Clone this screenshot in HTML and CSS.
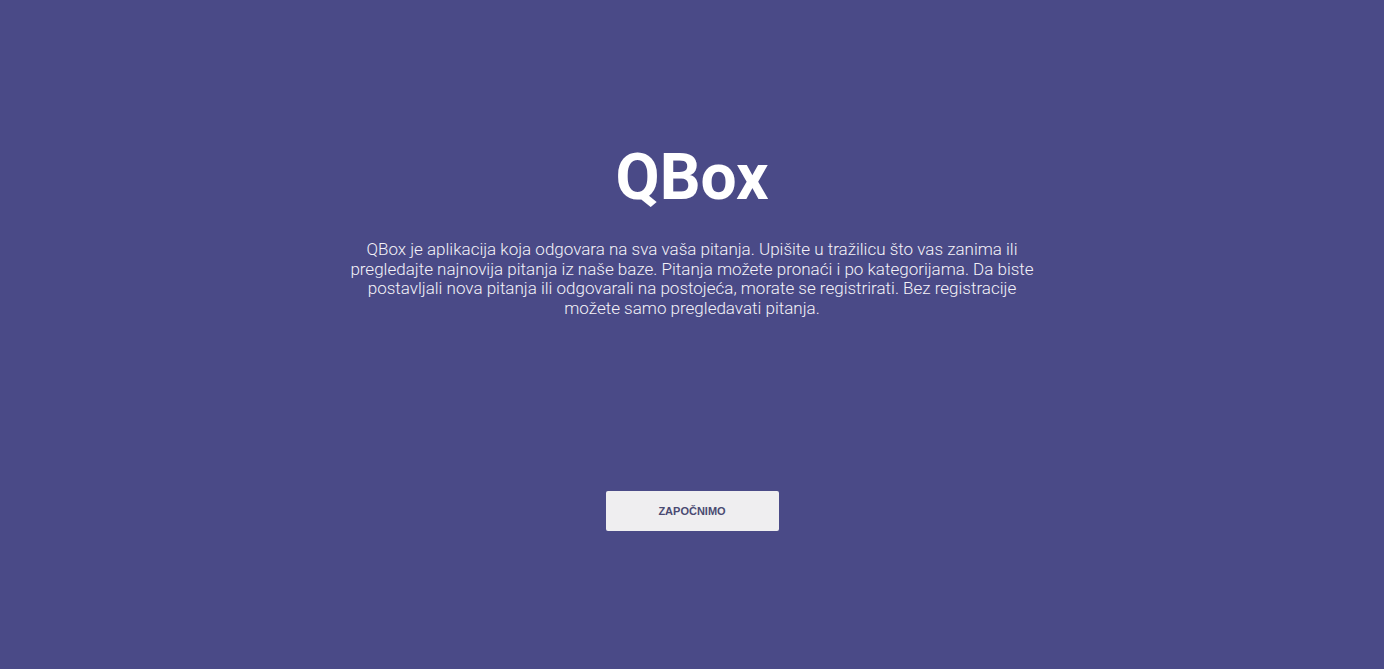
FILE: index.html
```html
<!DOCTYPE html>
<html lang="hr">
<head>
<meta charset="utf-8">
<title>QBox</title>
<link rel="stylesheet" href="styles.css">
</head>
<body>
<main class="hero">
  <h1 class="title">QBox</h1>
  <p class="intro">QBox je aplikacija koja odgovara na sva vaša pitanja. Upišite u tražilicu što vas zanima ili pregledajte najnovija pitanja iz naše baze. Pitanja možete pronaći i po kategorijama. Da biste postavljali nova pitanja ili odgovarali na postojeća, morate se registrirati. Bez registracije možete samo pregledavati pitanja.</p>
  <button class="start">ZAPOČNIMO</button>
</main>
</body>
</html>
```

FILE: styles.css
```css
html, body {
  margin: 0;
  padding: 0;
  height: 100%;
}
body {
  background: #4a4a87;
  font-family: Roboto, "Liberation Sans", sans-serif;
  color: #fff;
}
.hero {
  display: flex;
  flex-direction: column;
  align-items: center;
  padding-top: 138px;
}
.title {
  margin: 0;
  font-size: 64px;
  font-weight: 700;
  line-height: 80px;
}
.intro {
  margin: 22px 0 0;
  width: 690px;
  text-align: center;
  font-weight: 300;
  font-size: 17px;
  line-height: 19.5px;
  color: #f4f2f8;
}
.start {
  margin-top: 173px;
  width: 173px;
  height: 40px;
  border: none;
  border-radius: 2px;
  background: #efeef0;
  color: #4a4a72;
  font-family: "Liberation Sans", Arial, sans-serif;
  font-weight: 700;
  font-size: 11px;
  cursor: pointer;
}
```
